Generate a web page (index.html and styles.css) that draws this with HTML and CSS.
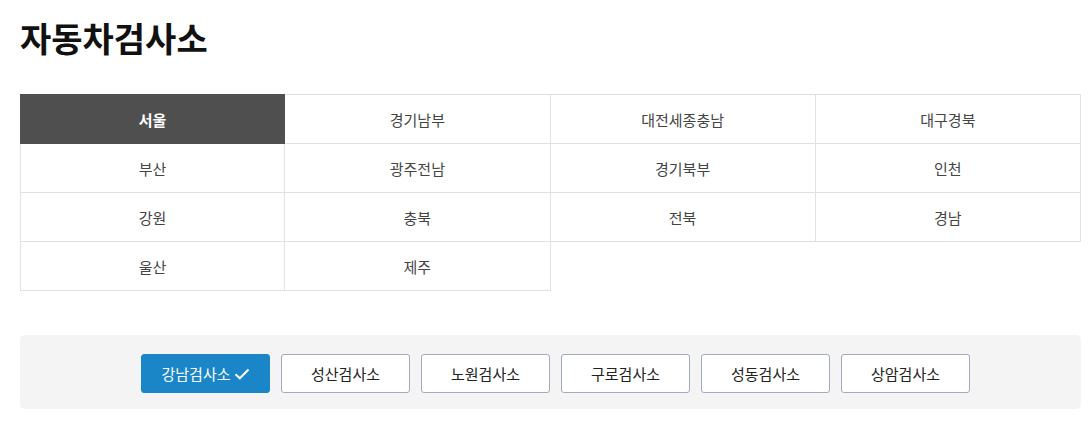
FILE: index.html
```html
<!DOCTYPE html>
<html lang="ko">
<head>
  <meta charset="UTF-8">
  <meta name="viewport" content="width=device-width, initial-scale=1.0">
  <title>자동차검사소</title>
  <link rel="stylesheet" href="styles.css">
</head>
<body>

  <h1 class="page-title">자동차검사소</h1>

  <ul class="region-grid">
    <li class="region active">서울</li>
    <li class="region">경기남부</li>
    <li class="region">대전세종충남</li>
    <li class="region">대구경북</li>
    <li class="region">부산</li>
    <li class="region">광주전남</li>
    <li class="region">경기북부</li>
    <li class="region">인천</li>
    <li class="region">강원</li>
    <li class="region">충북</li>
    <li class="region">전북</li>
    <li class="region">경남</li>
    <li class="region">울산</li>
    <li class="region">제주</li>
  </ul>

  <div class="center-box">
    <button class="center-btn selected">강남검사소
      <svg class="check" width="16" height="12" viewBox="0 0 16 12"><path d="M1.5 6.2 L5.8 10.3 L14.5 1.5" fill="none" stroke="#fff" stroke-width="2"/></svg>
    </button>
    <button class="center-btn">성산검사소</button>
    <button class="center-btn">노원검사소</button>
    <button class="center-btn">구로검사소</button>
    <button class="center-btn">성동검사소</button>
    <button class="center-btn">상암검사소</button>
  </div>

</body>
</html>
```

FILE: styles.css
```css
body {
  margin: 0;
  padding: 20px;
  background: #fff;
  font-family: "Noto Sans CJK KR", "Noto Sans", sans-serif;
  color: #222;
}

.page-title {
  margin: 0 0 38px;
  font-size: 34px;
  line-height: 36px;
  font-weight: 700;
  color: #111;
}

.region-grid {
  list-style: none;
  margin: 0;
  padding: 0;
  display: grid;
  grid-template-columns: repeat(4, 1fr);
  width: 1061px;
}

.region {
  height: 48px;
  display: flex;
  align-items: center;
  justify-content: center;
  font-size: 15px;
  color: #444;
  border-right: 1px solid #e1e1e1;
  border-bottom: 1px solid #e1e1e1;
}

.region:nth-child(4n+1) {
  border-left: 1px solid #e1e1e1;
}

.region:nth-child(-n+4) {
  height: 48px;
  border-top: 1px solid #e1e1e1;
}

.region.active {
  background: #4f4f4f;
  border-color: #4f4f4f;
  color: #fff;
  font-weight: 700;
}

.center-box {
  margin-top: 44px;
  width: 1061px;
  box-sizing: border-box;
  padding: 19px 0 16px 10px;
  background: #f4f4f4;
  border-radius: 5px;
  display: flex;
  justify-content: center;
  gap: 11px;
}

.center-btn {
  width: 129px;
  height: 39px;
  padding: 0;
  display: flex;
  align-items: center;
  justify-content: center;
  gap: 3px;
  font-family: inherit;
  font-size: 15px;
  color: #222;
  background: #fff;
  border: 1px solid #a3aabb;
  border-radius: 3px;
  cursor: pointer;
}

.center-btn.selected {
  background: #1a86c8;
  border-color: #1a86c8;
  color: #fff;
}
```
